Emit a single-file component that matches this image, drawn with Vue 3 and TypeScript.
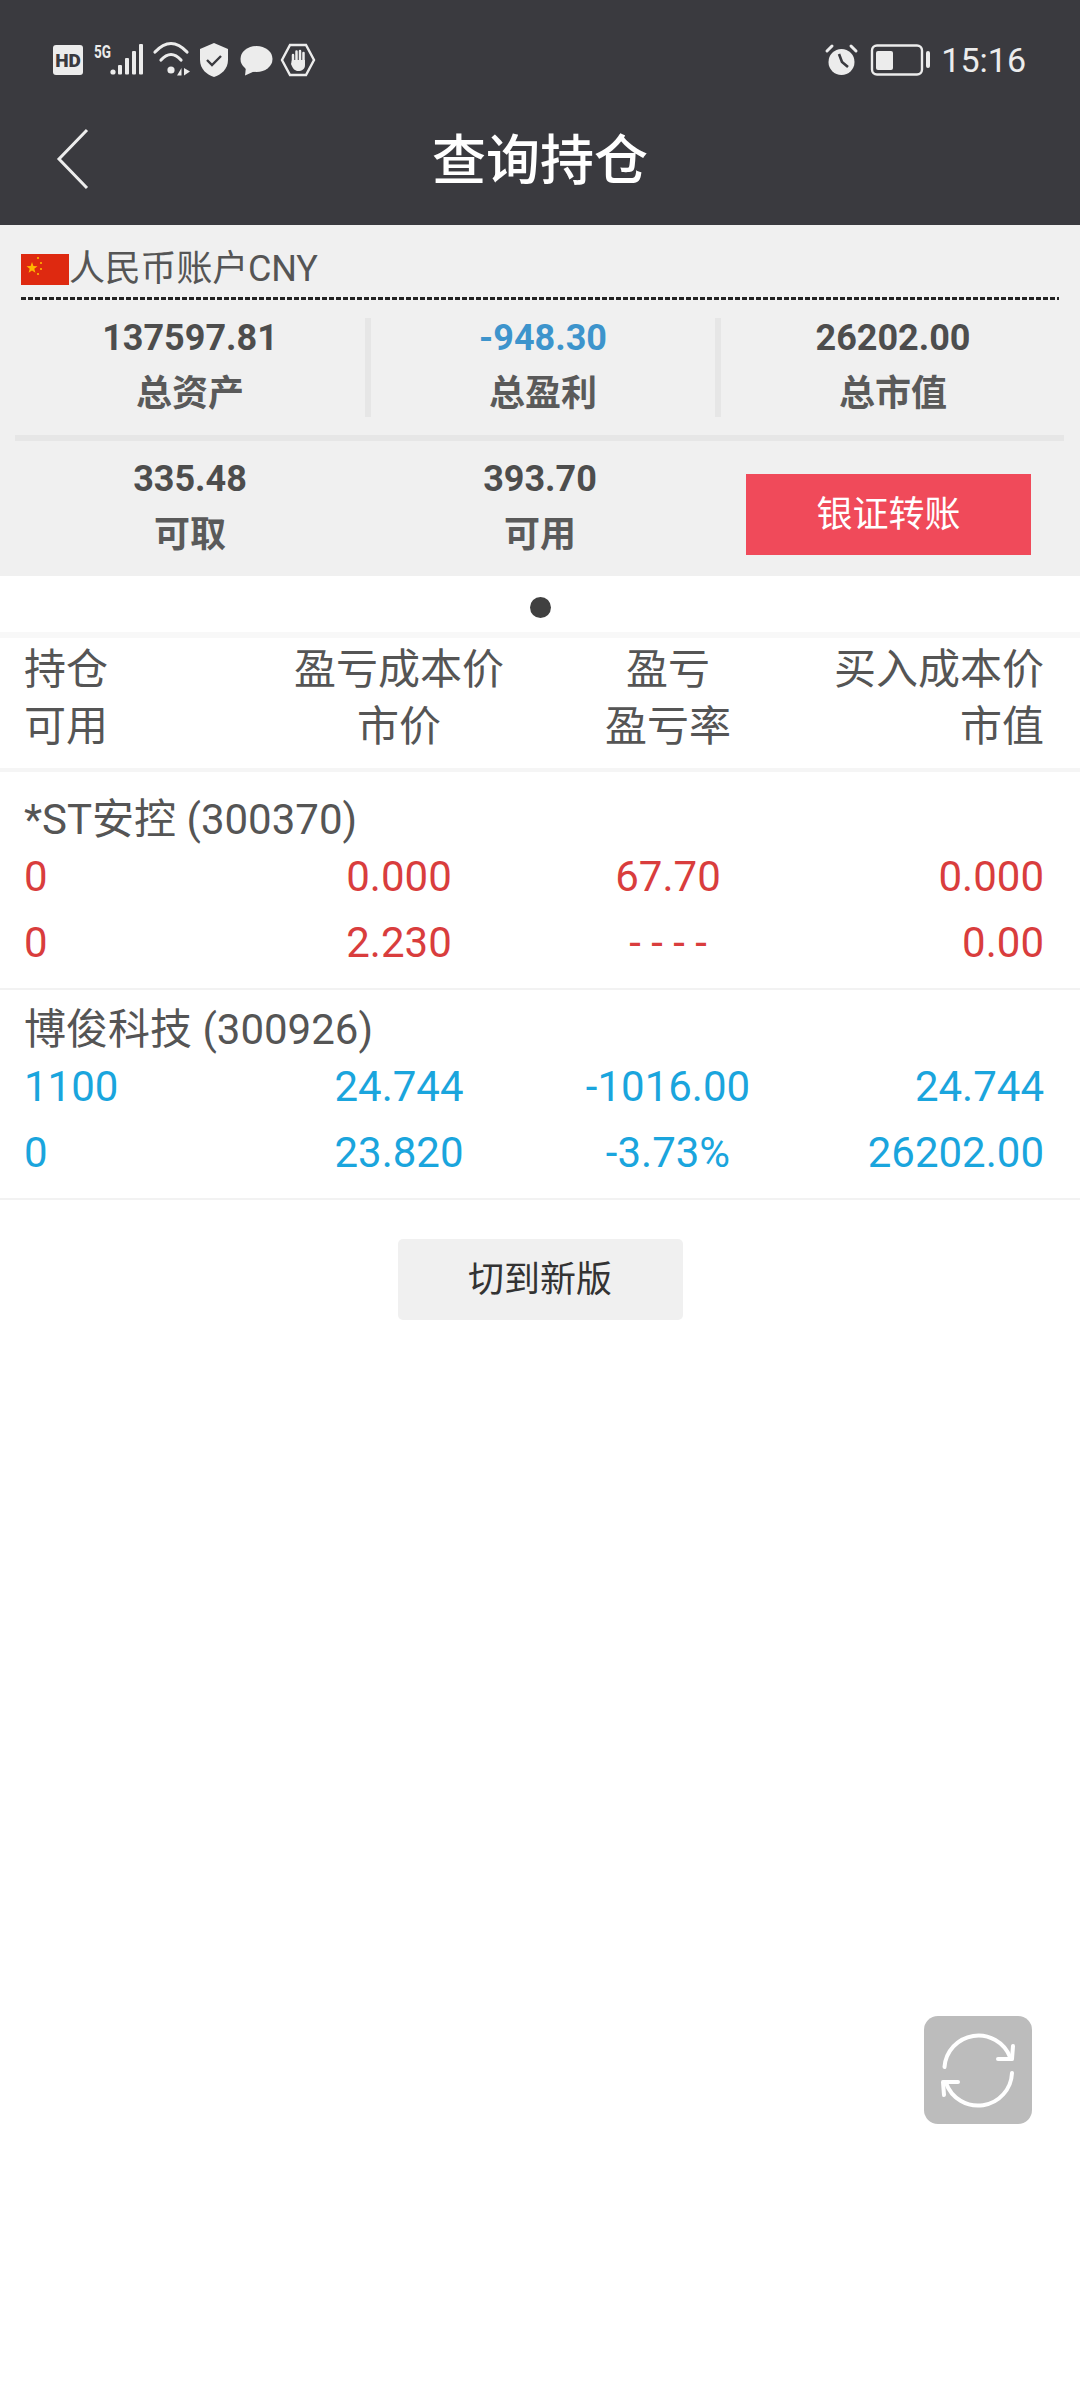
<script setup lang="ts">
interface Holding {
  name: string
  tone: string
  rows: string[][]
}
const holdings: Holding[] = [
  { name: '*ST安控 (300370)', tone: 'red', rows: [['0', '0.000', '67.70', '0.000'], ['0', '2.230', '- - - -', '0.00']] },
  { name: '博俊科技 (300926)', tone: 'blue', rows: [['1100', '24.744', '-1016.00', '24.744'], ['0', '23.820', '-3.73%', '26202.00']] },
]
</script>

<template>
  <div class="page">
    <header class="top">
      <div class="status">
        <svg class="st-left" width="270" height="40" viewBox="50 40 270 40">
          <rect x="53" y="45" width="30" height="30" rx="3" fill="#ececec" />
          <text x="68" y="66.500" text-anchor="middle" font-size="19" font-weight="900" fill="#3a3a3f" font-family="Roboto">HD</text>
          <text x="94" y="57.500" font-size="18" font-weight="700" fill="#ececec" font-family="Roboto" textLength="17" lengthAdjust="spacingAndGlyphs">5G</text>
          <g fill="#ececec">
            <circle cx="113" cy="72" r="2.600" />
            <rect x="118" y="65" width="4" height="9.500" rx="1" />
            <rect x="125" y="58" width="4" height="16.500" rx="1" />
            <rect x="132" y="51" width="4" height="23.500" rx="1" />
            <rect x="139" y="44" width="4" height="30.500" rx="1" />
          </g>
          <g fill="none" stroke="#ececec" stroke-width="3.200" stroke-linecap="round">
            <path d="M155 52 Q171 35 187 52" />
            <path d="M161 60 Q171 49 181 60" />
          </g>
          <circle cx="171" cy="70" r="3.600" fill="#ececec" />
          <path d="M177 75.500 L181.500 68 V75.500Z M184 68 V75.500 L190 71.500Z" fill="#ececec" />
          <path d="M214 43 L228 49 V60 C228 69 221 75 214 77 C207 75 200 69 200 60 V49Z" fill="#ececec" />
          <path d="M207 60 L212 65 L221 56" fill="none" stroke="#3a3a3f" stroke-width="2.400" />
          <ellipse cx="256.500" cy="59" rx="16" ry="13" fill="#ececec" />
          <path d="M246 67 L245 75.500 L255 71Z" fill="#ececec" />
          <path d="M290 45 H306 L314 60 L306 75 H290 L282 60Z" fill="none" stroke="#ececec" stroke-width="2.400" />
          <g stroke="#ececec" stroke-width="2.500" stroke-linecap="round">
            <path d="M293 55 V62 M296.500 51.500 V62 M300 51 V62 M303.500 53 V63" />
          </g>
          <path d="M292 60 H305 V65 C305 69 302 71 298 71 C295 71 293 69 291 64Z" fill="#ececec" />
        </svg>
        <div class="st-right">
          <svg width="115" height="40" viewBox="820 40 115 40">
            <circle cx="843.500" cy="62" r="13" fill="#ececec" />
            <path d="M841 54 L844 62 L850 67" fill="none" stroke="#3a3a3f" stroke-width="2.600" />
            <path d="M829 51 L834 46 M858 51 L853 46" stroke="#ececec" stroke-width="3" stroke-linecap="round" />
            <rect x="874" y="45.500" width="50" height="29" rx="5" fill="none" stroke="#ececec" stroke-width="2.400" />
            <rect x="878" y="51" width="17" height="19" rx="2" fill="#ececec" />
            <rect x="928" y="51" width="4" height="17" rx="2" fill="#ececec" />
          </svg>
          <span class="time">15:16</span>
        </div>
      </div>
      <div class="nav">
        <svg class="back" width="34" height="62" viewBox="0 0 34 62">
          <path d="M31 2 L3 31 L31 60" fill="none" stroke="#ededed" stroke-width="3" />
        </svg>
        <h1 class="title">查询持仓</h1>
      </div>
    </header>

    <section class="panel">
      <div class="account">
        <svg class="flag" width="48" height="31" viewBox="0 0 48 31">
          <rect width="48" height="31" fill="#de2910" />
          <path d="M11 8 L12.400 12 L16.500 12.200 L13.300 14.800 L14.400 18.800 L11 16.500 L7.600 18.800 L8.700 14.800 L5.500 12.200 L9.600 12Z" fill="#ffb700" />
          <g fill="#ffb700">
            <circle cx="17" cy="4" r="1.100" />
            <circle cx="20" cy="9" r="1.100" />
            <circle cx="20" cy="15" r="1.100" />
            <circle cx="17" cy="20" r="1.100" />
          </g>
        </svg>
        <span>人民币账户CNY</span>
      </div>
      <div class="dashes"></div>
      <div class="stats">
        <div class="stat">
          <div class="num">137597.81</div>
          <div class="lab">总资产</div>
        </div>
        <div class="stat">
          <div class="num profit">-948.30</div>
          <div class="lab">总盈利</div>
        </div>
        <div class="stat">
          <div class="num">26202.00</div>
          <div class="lab">总市值</div>
        </div>
      </div>
      <div class="rule"></div>
      <div class="funds">
        <div class="stat plain first">
          <div class="num">335.48</div>
          <div class="lab">可取</div>
        </div>
        <div class="stat plain second">
          <div class="num">393.70</div>
          <div class="lab">可用</div>
        </div>
        <button class="transfer">银证转账</button>
      </div>
    </section>

    <div class="pager"><i class="dot"></i></div>

    <div class="grid head">
      <div class="c1">持仓<br />可用</div>
      <div class="c2">盈亏成本价<br />市价</div>
      <div class="c3">盈亏<br />盈亏率</div>
      <div class="c4">买入成本价<br />市值</div>
    </div>

    <div class="list">
      <div v-for="h in holdings" :key="h.name" class="holding">
        <div class="name">{{ h.name }}</div>
        <div v-for="(r, i) in h.rows" :key="i" class="grid nums" :class="h.tone">
          <div class="c1">{{ r[0] }}</div>
          <div class="c2">{{ r[1] }}</div>
          <div class="c3">{{ r[2] }}</div>
          <div class="c4">{{ r[3] }}</div>
        </div>
      </div>
    </div>

    <div class="switch-wrap">
      <button class="switch">切到新版</button>
    </div>

    <div class="refresh">
      <svg width="108" height="108" viewBox="0 0 108 108">
        <g fill="none" stroke="#fff" stroke-width="4" stroke-linecap="round" stroke-linejoin="round">
          <path d="M20.500 51 A34 34 0 0 1 86 41" />
          <path d="M89 30 L88 43 L74 43" />
          <path d="M88 57 A34 34 0 0 1 22 67" />
          <path d="M20 79 L19 66 L34 66" />
        </g>
      </svg>
    </div>
  </div>
</template>

<style>
html,
body {
  margin: 0;
  background: #fff;
}
</style>

<style scoped>
.page {
  position: relative;
  width: 1080px;
  height: 2388px;
  overflow: hidden;
  background: #fff;
  font-family: Roboto, "Noto Sans CJK SC", sans-serif;
  color: #555;
}
.top {
  height: 225px;
  background: #3a3a3f;
}
.status {
  height: 120px;
  display: flex;
  justify-content: space-between;
  align-items: center;
  padding: 0 54px 0 50px;
  box-sizing: border-box;
}
.st-right {
  display: flex;
  align-items: center;
  gap: 8px;
}
.time {
  color: #ececec;
  font-size: 34px;
  line-height: 40px;
}
.nav {
  height: 84px;
  display: flex;
  align-items: center;
  justify-content: center;
  position: relative;
}
.back {
  position: absolute;
  left: 56px;
  top: 8px;
}
.title {
  margin: 0;
  color: #fff;
  font-size: 54px;
  font-weight: 500;
  line-height: 84px;
}
.panel {
  height: 351px;
  background: #f0f0f0;
  padding-top: 26px;
  box-sizing: border-box;
}
.account {
  display: flex;
  align-items: center;
  margin: 0 21px;
  height: 36px;
  font-size: 36px;
  letter-spacing: -0.2px;
  line-height: 36px;
  color: #555;
}
.flag {
  flex: none;
}
.dashes {
  height: 3px;
  margin: 10px 21px 0;
  background: repeating-linear-gradient(90deg, #222 0 5px, transparent 5px 7px);
}
.stats {
  display: grid;
  grid-template-columns: 350px 350px 350px;
  margin: 18px 15px 0;
}
.stat {
  text-align: center;
  height: 99px;
}
.stats .stat + .stat {
  border-left: 6px solid #e6e6e6;
}
.num {
  height: 40px;
  font-size: 36px;
  font-weight: 700;
  line-height: 40px;
  color: #4d4d4d;
}
.profit {
  color: #3d94cc;
}
.lab {
  margin-top: 16px;
  height: 40px;
  font-size: 36px;
  font-weight: 700;
  line-height: 40px;
  color: #5a5a5a;
}
.rule {
  height: 6px;
  margin: 18px 16px 0 15px;
  background: #e6e6e6;
}
.funds {
  display: flex;
  align-items: flex-start;
  padding-top: 18px;
}
.plain {
  flex: none;
}
.first {
  width: 350px;
  margin-left: 15px;
}
.second {
  width: 350px;
}
.transfer {
  width: 285px;
  height: 81px;
  margin: 15px 0 0 31px;
  border: 0;
  padding: 0 0 7px;
  background: #f04a5a;
  color: #fff;
  font-family: inherit;
  font-size: 36px;
}
.pager {
  height: 62px;
  display: flex;
  justify-content: center;
  padding-top: 21px;
  box-sizing: border-box;
  border-bottom: 6px solid #f8f8f8;
}
.dot {
  width: 21px;
  height: 21px;
  border-radius: 50%;
  background: #404040;
}
.grid {
  display: grid;
  grid-template-columns: 265px 220px 318px 217px;
  padding: 0 36px 0 24px;
}
.c2,
.c3 {
  text-align: center;
}
.c4 {
  text-align: right;
}
.head {
  padding-top: 3px;
  padding-bottom: 13px;
  font-size: 42px;
  line-height: 57px;
  border-bottom: 4px solid #f5f5f5;
  color: #555;
}
.list {
  padding-top: 8px;
}
.holding {
  padding: 16px 0 12px;
  border-bottom: 2px solid #f2f2f2;
}
.name {
  padding-left: 24px;
  font-size: 42px;
  line-height: 48px;
  color: #555;
}
.nums {
  font-size: 42px;
  line-height: 66px;
}
.red {
  color: #d93d3d;
}
.blue {
  color: #1aa5dd;
}
.switch-wrap {
  display: flex;
  justify-content: center;
  padding-top: 39px;
}
.switch {
  width: 285px;
  height: 81px;
  border: 0;
  padding: 0 0 7px;
  border-radius: 5px;
  background: #f0f0f0;
  color: #333;
  font-family: inherit;
  font-size: 36px;
}
.refresh {
  position: absolute;
  left: 924px;
  top: 2016px;
  width: 108px;
  height: 108px;
  border-radius: 14px;
  background: #bcbcbc;
}
.refresh svg {
  display: block;
}
</style>
